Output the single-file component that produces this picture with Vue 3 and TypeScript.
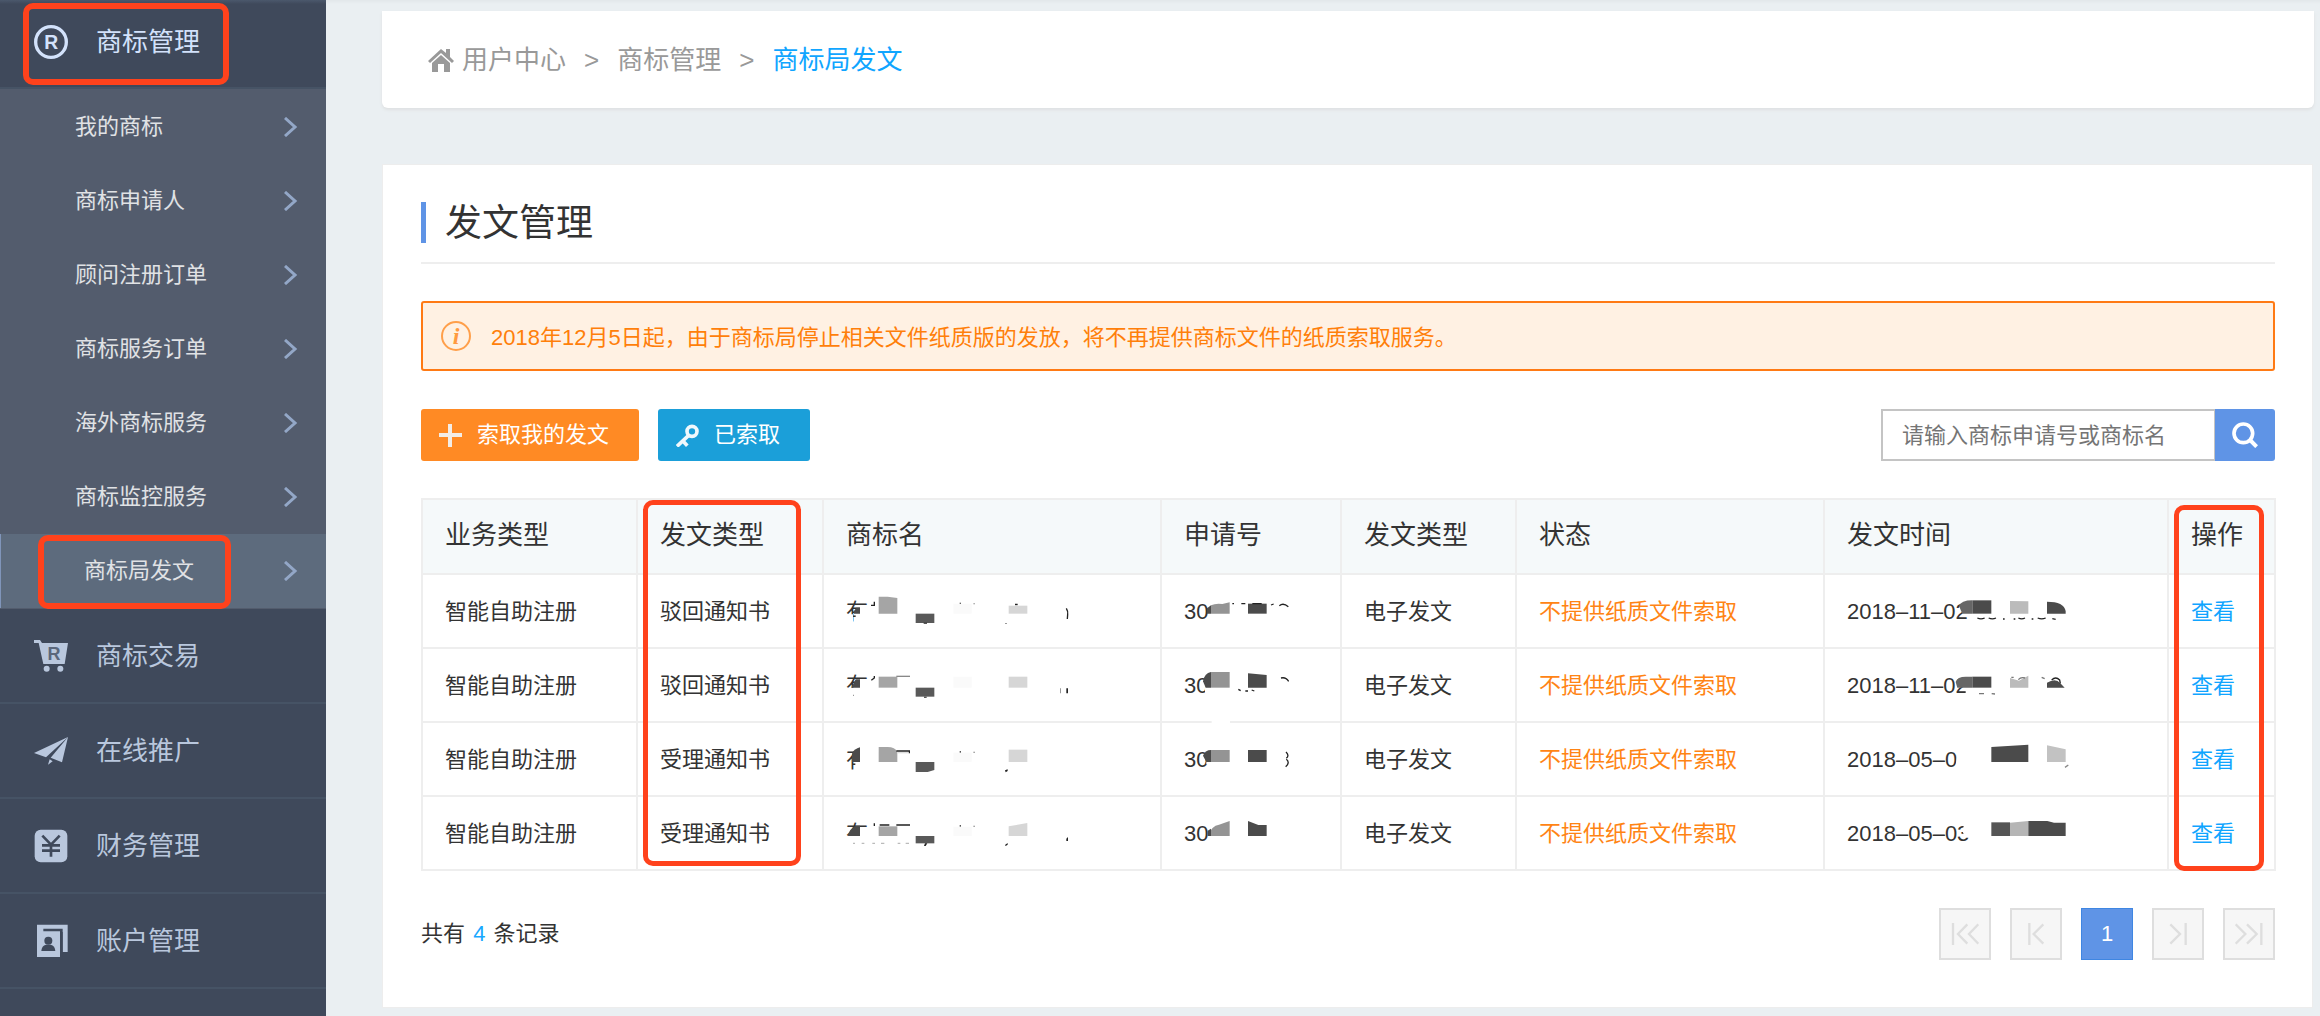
<script setup lang="ts">
import { ref } from 'vue'

interface Shape {
  d: string
  fill?: string
  line?: string
}

interface MaskedText {
  text: string
  shapes: Shape[]
}

interface DocumentRow {
  business: string
  kind: string
  name: MaskedText
  code: MaskedText
  form: string
  status: string
  time: MaskedText
}

const subMenu: string[] = [
  '我的商标',
  '商标申请人',
  '顾问注册订单',
  '商标服务订单',
  '海外商标服务',
  '商标监控服务',
  '商标局发文',
]
const activeItem = '商标局发文'

const sections = [
  { key: 'cart', label: '商标交易' },
  { key: 'plane', label: '在线推广' },
  { key: 'yen', label: '财务管理' },
  { key: 'account', label: '账户管理' },
]

const columns = [
  { title: '业务类型', width: 215 },
  { title: '发文类型', width: 186 },
  { title: '商标名', width: 338 },
  { title: '申请号', width: 180 },
  { title: '发文类型', width: 175 },
  { title: '状态', width: 308 },
  { title: '发文时间', width: 344 },
  { title: '操作', width: 107 },
]

const keyword = ref('')

const white = '#fff'
const ink = '#222'
const dark = '#4b4b4b'

const rows: DocumentRow[] = [
  {
    business: '智能自助注册',
    kind: '驳回通知书',
    name: {
      text: '有',
      shapes: [
        { d: 'M104 158H150V195H104ZM117 136H150V160H117ZM80 160H96V195H80Z', fill: white },
        { d: 'M106 140H117V158H99V150Z', fill: dark },
        { d: 'M160 122V133H150', line: ink },
        { d: 'M173 107H200L229 111V158H173Z', fill: '#a5a5a5' },
        { d: 'M284 158H340V186H284Z', fill: '#595959' },
        { d: 'M308 185H318V188H308ZM416 125H420V129H416ZM582 128H590V133H582Z', fill: ink },
        { d: 'M397 128H452V158H397Z', fill: '#fafafa' },
        { d: 'M563 134H619V158H563Z', fill: '#d6d6d6' },
        { d: 'M457 127H462V130H457ZM552 186H558V189H552Z', fill: '#999' },
        { d: 'M736 142Q742 152 740 160L739 174', line: ink },
      ],
    },
    code: {
      text: '30',
      shapes: [
        { d: 'M1164 158V142L1176 133V158Z', fill: dark },
        { d: 'M1176 133Q1190 126 1210 129L1232 124V158H1176Z', fill: '#949494' },
        { d: 'M1287 128H1343V158H1287Z', fill: dark },
        { d: 'M1240 128H1245M1267 128H1279M1300 128H1328M1356 132L1364 129M1381 134Q1393 124 1408 137', line: ink },
      ],
    },
    form: '电子发文',
    status: '不提供纸质文件索取',
    time: {
      text: '2018–11–02',
      shapes: [
        { d: 'M420 135Q426 118 460 118V158H430Z', fill: '#666' },
        { d: 'M460 118H517V158H460Z', fill: dark },
        { d: 'M573 120L628 121V158H573Z', fill: '#bbb' },
        { d: 'M684 122Q735 122 740 150V158H684Z', fill: dark },
        { d: 'M475 171Q486 176 497 171M509 171Q520 176 531 171M552 174H557M584 174H589M598 171Q608 176 618 171M638 174H643M656 171Q668 176 680 171M700 173L710 175', line: ink },
      ],
    },
  },
  {
    business: '智能自助注册',
    kind: '驳回通知书',
    name: {
      text: '有',
      shapes: [
        { d: 'M78 381H150V418H78ZM117 358H150V384H117Z', fill: white },
        { d: 'M104 356H117V381H91Z', fill: dark },
        { d: 'M160 346V352L151 359', line: ink },
        { d: 'M173 348H229V381H173Z', fill: '#a5a5a5' },
        { d: 'M226 347H267', line: '#888' },
        { d: 'M284 381H340V408H284Z', fill: '#595959' },
        { d: 'M309 408H317V411H309ZM736 383H741V398H736Z', fill: ink },
        { d: 'M397 348H452V381H397Z', fill: '#fafafa' },
        { d: 'M563 348H619V381H563Z', fill: '#d6d6d6' },
        { d: 'M717 383H720V398H717ZM96 402H99V406H96Z', fill: '#999' },
      ],
    },
    code: {
      text: '30',
      shapes: [
        { d: 'M1158 378H1180V405H1158Z', fill: white },
        { d: 'M1152 362Q1156 338 1176 334V381H1160Z', fill: dark },
        { d: 'M1176 334H1232V381H1176Z', fill: '#949494' },
        { d: 'M1287 338L1343 343V381H1287Z', fill: dark },
        { d: 'M1258 386L1265 390M1279 391H1287M1298 388L1306 391M1386 352Q1400 348 1409 362', line: ink },
      ],
    },
    form: '电子发文',
    status: '不提供纸质文件索取',
    time: {
      text: '2018–11–02',
      shapes: [
        { d: 'M440 381H455V405H440Z', fill: white },
        { d: 'M410 364Q415 348 440 348H460V381H415Z', fill: '#666' },
        { d: 'M460 348H517V381H460Z', fill: dark },
        { d: 'M573 352L600 360L628 345V381H573Z', fill: '#bbb' },
        { d: 'M598 357Q606 348 618 352M577 350H584M668 350L677 354M480 399H495M518 399L528 400', line: '#777' },
        { d: 'M684 381V366Q710 350 724 368L737 381Z', fill: dark },
        { d: 'M698 358Q710 346 722 358L724 368', line: ink },
      ],
    },
  },
  {
    business: '智能自助注册',
    kind: '受理通知书',
    name: {
      text: '有',
      shapes: [
        { d: 'M117 545H152V642H117ZM103 605H118V642H103ZM78 545H118V571H78Z', fill: white },
        { d: 'M117 561V605H93V580Q100 565 117 561Z', fill: dark },
        { d: 'M173 560H200Q222 560 229 575V605H173Z', fill: '#a5a5a5' },
        { d: 'M226 572H267M265 572V579', line: ink },
        { d: 'M228 575H262V579H228Z', fill: '#ddd' },
        { d: 'M284 605H340V629L320 635H284Z', fill: '#595959' },
        { d: 'M416 573H420V577H416ZM552 630L560 627V632L554 636Z', fill: ink },
        { d: 'M397 577H452V605H397Z', fill: '#fafafa' },
        { d: 'M563 568H619V605H563Z', fill: '#d6d6d6' },
        { d: 'M457 574H462V577H457Z', fill: '#888' },
      ],
    },
    code: {
      text: '30',
      shapes: [
        { d: 'M1178 480H1233V491H1178ZM1162 600H1180V612H1162Z', fill: white },
        { d: 'M1152 586Q1158 569 1176 569V605H1162Z', fill: dark },
        { d: 'M1176 569H1232V605H1176Z', fill: '#949494' },
        { d: 'M1287 569H1343V605H1287Z', fill: dark },
        { d: 'M1401 575Q1412 586 1402 594M1402 597Q1414 607 1400 619', line: ink },
      ],
    },
    form: '电子发文',
    status: '不提供纸质文件索取',
    time: {
      text: '2018–05–0',
      shapes: [
        { d: 'M416 568H430V628H408L412 600Z', fill: white },
        { d: 'M517 560L628 553V605H517Z', fill: dark },
        { d: 'M684 555L740 567V605H684Z', fill: '#c2c2c2' },
        { d: 'M738 621L748 614', line: '#888' },
      ],
    },
  },
  {
    business: '智能自助注册',
    kind: '受理通知书',
    name: {
      text: '有',
      shapes: [
        { d: 'M78 828H150V866H78ZM117 802H150V830H117Z', fill: white },
        { d: 'M81 828Q85 805 105 797H117V828Z', fill: dark },
        { d: 'M160 790V798M176 795H205M226 795H267', line: ink },
        { d: 'M96 850H102M122 850H130M154 850H162M180 850H190M230 850H238M254 850H264', line: '#bbb' },
        { d: 'M173 799H229V828H173Z', fill: '#a5a5a5' },
        { d: 'M284 828H340V850H284Z', fill: '#595959' },
        { d: 'M312 850H319L314 858H309ZM552 855L560 849V854L554 858ZM736 836L741 831V843H736ZM416 796H420V800H416Z', fill: ink },
        { d: 'M397 800H452V828H397Z', fill: '#fafafa' },
        { d: 'M563 799L619 789V828H563Z', fill: '#d6d6d6' },
        { d: 'M457 797H462V800H457Z', fill: '#888' },
      ],
    },
    code: {
      text: '30',
      shapes: [
        { d: 'M1166 828Q1178 797 1200 794L1232 783V828Z', fill: '#949494' },
        { d: 'M1166 828V812L1176 806V828Z', fill: dark },
        { d: 'M1287 783L1318 795H1343V828H1287Z', fill: dark },
      ],
    },
    form: '电子发文',
    status: '不提供纸质文件索取',
    time: {
      text: '2018–05–03',
      shapes: [
        { d: 'M438 785H460V833H438L430 812Z', fill: white },
        { d: 'M517 787H573V828H517Z', fill: '#555' },
        { d: 'M573 788L628 783V828H573Z', fill: '#b5b5b5' },
        { d: 'M628 783H685L705 788H740V828H628Z', fill: dark },
      ],
    },
  },
]

const maskBox = (left: number, index: number): string => `${left} ${93 + index * 223} 720 120`

const pagerButtons = [
  { label: '首页', d: 'M-36-33V33M7-29L-21 0L7 29M40-29L12 0L40 29' },
  { label: '上一页', d: 'M-20-33V33M22-29L-7 0L22 29' },
  { label: '1', d: '' },
  { label: '下一页', d: 'M-23-29L6 0L-23 29M23-33V33' },
  { label: '末页', d: 'M-40-29L-11 0L-40 29M-6-29L23 0L-6 29M37-33V33' },
]
</script>

<template>
  <div class="page">
    <aside class="sidebar">
      <a href="#" class="section section-open">
        <svg class="section-icon" viewBox="0 0 102 102" aria-hidden="true">
          <circle cx="51" cy="51" r="46" fill="none" stroke="currentColor" stroke-width="10" />
          <text x="52" y="72" text-anchor="middle" font-size="58" font-weight="700" fill="currentColor">R</text>
        </svg>
        <span>商标管理</span>
        <i class="marker marker-section"></i>
      </a>
      <nav class="submenu">
        <a v-for="item in subMenu" :key="item" href="#" class="sub-item" :class="{ active: item === activeItem }">
          <span>{{ item }}</span>
          <svg class="chevron" viewBox="0 0 14 20" aria-hidden="true">
            <path d="M1 1L11 10L1 19" fill="none" stroke="currentColor" stroke-width="3" />
          </svg>
          <i v-if="item === activeItem" class="marker marker-sub"></i>
        </a>
      </nav>
      <a v-for="section in sections" :key="section.key" href="#" class="section">
        <svg class="section-icon" viewBox="0 0 102 102" aria-hidden="true">
          <template v-if="section.key === 'cart'">
            <path d="M0 3H18L24 12H102L92 75H28L14 12H0Z" fill="currentColor" />
            <circle cx="38" cy="89" r="9" fill="currentColor" />
            <circle cx="79" cy="89" r="9" fill="currentColor" />
            <text x="60" y="62" text-anchor="middle" font-size="54" font-weight="700" fill="#5b677b">R</text>
          </template>
          <template v-else-if="section.key === 'plane'">
            <path d="M0 57L102 9L36 70ZM102 9L84 85L50 71ZM47 76L42 92L56 82Z" fill="currentColor" />
          </template>
          <template v-else-if="section.key === 'yen'">
            <rect x="2" y="2" width="98" height="98" rx="18" fill="currentColor" />
            <path d="M25 20L51 47L77 20M51 47V83M24 49H78M24 65H78" fill="none" stroke="#3f495b" stroke-width="8" />
          </template>
          <template v-else>
            <path d="M9 2H101V84H86V24H78V99H9Z" fill="currentColor" />
            <path d="M28 18H82V99" fill="none" stroke="#3f495b" stroke-width="8" />
            <circle cx="43" cy="50" r="12" fill="#3f495b" />
            <path d="M22 81Q23 65 36 62H50Q63 65 64 81Z" fill="#3f495b" />
          </template>
        </svg>
        <span>{{ section.label }}</span>
      </a>
    </aside>

    <main class="content">
      <nav class="breadcrumb">
        <a href="#" class="home">
          <svg viewBox="0 0 26 24" width="26" height="24" aria-hidden="true">
            <path d="M0 13L13 1L18 5V1H22V9L26 13L24 15L13 5L2 15Z" fill="#999" />
            <path d="M4 15L13 7L22 15V24H16V16H10V24H4Z" fill="#999" />
          </svg>
          用户中心
        </a>
        <span>&gt;</span>
        <a href="#">商标管理</a>
        <span>&gt;</span>
        <a href="#" class="current">商标局发文</a>
      </nav>

      <section class="panel">
        <header class="panel-head">
          <h1>发文管理</h1>
        </header>

        <p class="notice">
          <svg viewBox="0 0 30 30" width="30" height="30" aria-hidden="true">
            <circle cx="15" cy="15" r="14" fill="none" stroke="#ff9f4a" stroke-width="2" />
            <text x="15" y="23" text-anchor="middle" class="info-letter">i</text>
          </svg>
          <span>2018年12月5日起，由于商标局停止相关文件纸质版的发放，将不再提供商标文件的纸质索取服务。</span>
        </p>

        <div class="toolbar">
          <div class="actions">
            <button type="button" class="btn btn-orange">
              <svg viewBox="0 0 23 23" width="23" height="23" aria-hidden="true">
                <path d="M11 0V23M0 11H23" fill="none" stroke="#f3ece6" stroke-width="4" />
              </svg>
              索取我的发文
            </button>
            <button type="button" class="btn btn-blue">
              <svg viewBox="0 0 69 69" width="23" height="23" aria-hidden="true">
                <circle cx="48" cy="22" r="15" fill="none" stroke="#f0f8fc" stroke-width="11" />
                <path d="M38 34L3 67M20 50L34 65" fill="none" stroke="#f0f8fc" stroke-width="11" />
              </svg>
              已索取
            </button>
          </div>
          <form class="search" @submit.prevent>
            <input v-model="keyword" type="text" aria-label="商标申请号或商标名" placeholder="请输入商标申请号或商标名" />
            <button type="submit" aria-label="搜索">
              <svg viewBox="0 0 78 78" width="26" height="26" aria-hidden="true">
                <circle cx="34" cy="34" r="28" fill="none" stroke="#fff" stroke-width="11" />
                <path d="M54 54L74 74" fill="none" stroke="#fff" stroke-width="12" />
              </svg>
            </button>
          </form>
        </div>

        <table>
          <colgroup>
            <col v-for="(column, index) in columns" :key="index" :style="{ width: column.width + 'px' }" />
          </colgroup>
          <thead>
            <tr>
              <th v-for="(column, index) in columns" :key="index" scope="col">
                {{ column.title }}
                <i v-if="index === 1" class="marker marker-kind"></i>
                <i v-if="index === 7" class="marker marker-action"></i>
              </th>
            </tr>
          </thead>
          <tbody>
            <tr v-for="(row, index) in rows" :key="index">
              <td>{{ row.business }}</td>
              <td>{{ row.kind }}</td>
              <td>
                <div class="masked">
                  {{ row.name.text }}
                  <svg :viewBox="maskBox(75, index)" aria-hidden="true">
                    <path v-for="(shape, n) in row.name.shapes" :key="n" :d="shape.d" :fill="shape.fill ?? 'none'" :stroke="shape.line ?? 'none'" stroke-width="4" />
                  </svg>
                </div>
              </td>
              <td>
                <div class="masked">
                  {{ row.code.text }}
                  <svg :viewBox="maskBox(1095, index)" aria-hidden="true">
                    <path v-for="(shape, n) in row.code.shapes" :key="n" :d="shape.d" :fill="shape.fill ?? 'none'" :stroke="shape.line ?? 'none'" stroke-width="4" />
                  </svg>
                </div>
              </td>
              <td>{{ row.form }}</td>
              <td class="status">{{ row.status }}</td>
              <td>
                <div class="masked">
                  {{ row.time.text }}
                  <svg :viewBox="maskBox(84, index)" aria-hidden="true">
                    <path v-for="(shape, n) in row.time.shapes" :key="n" :d="shape.d" :fill="shape.fill ?? 'none'" :stroke="shape.line ?? 'none'" stroke-width="4" />
                  </svg>
                </div>
              </td>
              <td><a href="#" class="view">查看</a></td>
            </tr>
          </tbody>
        </table>

        <footer class="panel-foot">
          <p>共有 <b>4</b> 条记录</p>
          <div class="pager">
            <button v-for="item in pagerButtons" :key="item.label" type="button" :class="{ on: !item.d }" :disabled="!!item.d" :aria-label="item.label">
              <svg v-if="item.d" viewBox="-42 -36 84 72" width="28" height="24" aria-hidden="true">
                <path :d="item.d" fill="none" stroke="#dedede" stroke-width="7" />
              </svg>
              <template v-else>{{ item.label }}</template>
            </button>
          </div>
        </footer>
      </section>
    </main>
  </div>
</template>

<style>
body {
  margin: 0;
  background: #eaeff2;
}
</style>

<style scoped>
* {
  box-sizing: border-box;
}

.page {
  display: flex;
  min-height: 100vh;
  background: linear-gradient(#e2e7ea, #eaeff2 4px);
  color: #333;
  font: 22px/30px "Liberation Sans", "Noto Sans CJK SC", sans-serif;
}

a {
  color: inherit;
  text-decoration: none;
}

button,
input {
  margin: 0;
  font: inherit;
}

h1,
p {
  margin: 0;
  font-weight: 400;
}

.sidebar {
  flex: none;
  width: 326px;
  background: #3f495b;
}

.section {
  position: relative;
  display: flex;
  align-items: center;
  gap: 28px;
  height: 95px;
  padding-left: 34px;
  border-bottom: 2px solid #465365;
  color: #b9c7dd;
  font-size: 26px;
}

.section-open {
  height: 89px;
  padding-bottom: 4px;
  background: linear-gradient(#4b586c, #3f495b 4px);
  color: #d3e2fb;
}

.section-icon {
  flex: none;
  width: 34px;
  height: 34px;
}

.submenu {
  padding: 1px 0;
  background: #535c6d;
}

.sub-item {
  position: relative;
  display: flex;
  align-items: center;
  justify-content: space-between;
  height: 74px;
  padding: 0 28px 0 75px;
  color: #e0e2e5;
}

.sub-item.active {
  padding-left: 83px;
  border-left: 1px solid #8095ba;
  background: #5d6b7d;
}

.chevron {
  width: 14px;
  height: 20px;
  color: #93a7c7;
}

.marker {
  position: absolute;
  z-index: 1;
  border: 5px solid #ff421c;
  border-radius: 10px;
  pointer-events: none;
}

.marker-section {
  top: 3px;
  left: 23px;
  width: 206px;
  height: 82px;
  border-width: 6px;
}

.marker-sub {
  top: 1px;
  left: 37px;
  width: 193px;
  height: 74px;
  border-width: 6px;
}

.marker-kind {
  top: 0;
  left: 5px;
  width: 158px;
  height: 366px;
}

.marker-action {
  top: 5px;
  left: 5px;
  width: 90px;
  height: 366px;
}

.content {
  flex: 1;
  min-width: 0;
  padding: 11px 6px 8px 56px;
}

.breadcrumb {
  display: flex;
  align-items: center;
  gap: 18px;
  height: 97px;
  padding-left: 46px;
  border-radius: 0 0 6px 6px;
  background: #fff;
  box-shadow: 0 2px 3px #dfe1e2;
  color: #999;
  font-size: 26px;
}

.home {
  display: flex;
  align-items: center;
  gap: 8px;
}

.current {
  color: #10a5ff;
}

.panel {
  margin: 56px 1px 0 0;
  padding: 37px 37px 47px 38px;
  border: 1px solid #ededed;
  background: #fff;
}

.panel-head {
  padding-bottom: 19px;
  border-bottom: 2px solid #eee;
}

h1 {
  height: 41px;
  padding-left: 19px;
  border-left: 5px solid #5f94e6;
  font-size: 37px;
  line-height: 44px;
}

.notice {
  display: flex;
  align-items: center;
  gap: 20px;
  height: 70px;
  margin-top: 37px;
  padding-left: 18px;
  border: 2px solid #ff7a14;
  border-radius: 3px;
  background: #fff1e3;
  color: #ff7f0a;
}

.notice span {
  padding-top: 3px;
}

.info-letter {
  fill: #ff9a40;
  font: italic 700 24px "Liberation Serif", serif;
}

.toolbar {
  display: flex;
  justify-content: space-between;
  margin: 38px 0 37px;
}

.actions {
  display: flex;
  gap: 19px;
}

.btn {
  display: flex;
  align-items: center;
  gap: 15px;
  height: 52px;
  padding: 0 30px 0 18px;
  border: 0;
  border-radius: 3px;
  color: #fff;
}

.btn-orange {
  background: #ff8a24;
}

.btn-blue {
  background: #1b9fd9;
}

.search {
  display: flex;
}

.search input {
  width: 334px;
  height: 52px;
  padding: 2px 19px 0;
  border: 2px solid #c4c4c4;
  border-right-width: 1px;
  border-radius: 0;
  background: #fff;
  color: #333;
}

.search input::placeholder {
  color: #757575;
  opacity: 1;
}

.search button {
  display: flex;
  align-items: center;
  justify-content: center;
  width: 60px;
  height: 52px;
  padding: 0;
  border: 0;
  border-radius: 0 3px 3px 0;
  background: #5f94e6;
}

table {
  width: 100%;
  border-collapse: collapse;
  table-layout: fixed;
}

th,
td {
  height: 74px;
  padding: 1px 0 0 22px;
  border: 2px solid #eee;
  text-align: left;
  white-space: nowrap;
}

th {
  position: relative;
  height: 75px;
  padding: 0 0 3px 22px;
  background: #f5f9fa;
  font-size: 26px;
  font-weight: 400;
}

.status {
  color: #ff8414;
}

.view {
  color: #10a5ff;
}

.masked {
  position: relative;
  line-height: 40px;
}

.masked svg {
  position: absolute;
  top: 0;
  left: 0;
  width: 240px;
  height: 40px;
  overflow: visible;
}

.panel-foot {
  display: flex;
  align-items: center;
  justify-content: space-between;
  margin-top: 37px;
}

.panel-foot b {
  margin: 0 2px;
  color: #18a8ff;
  font-weight: 400;
}

.pager {
  display: flex;
  gap: 19px;
}

.pager button {
  display: flex;
  align-items: center;
  justify-content: center;
  width: 52px;
  height: 52px;
  padding: 0;
  border: 2px solid #dedede;
  background: #f6f6f6;
}

.pager .on {
  border: 1px solid #3f86e2;
  background: #5f94e6;
  color: #fff;
}
</style>
